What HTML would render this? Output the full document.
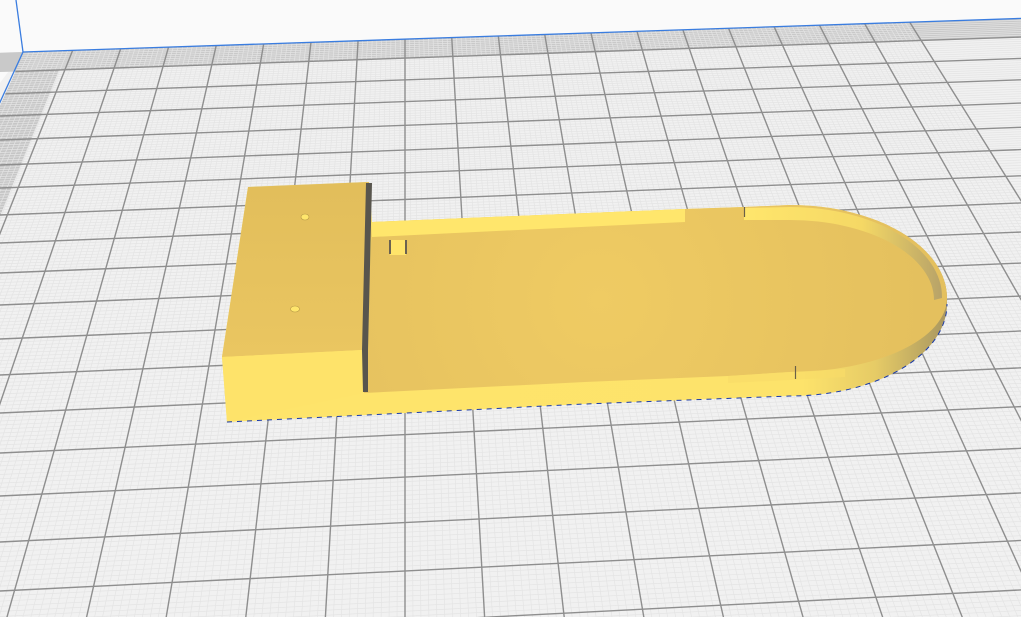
<!DOCTYPE html>
<html><head><meta charset="utf-8"><style>
html,body{margin:0;padding:0;width:1021px;height:617px;overflow:hidden;background:#fafafa}
svg{display:block;position:fixed;left:0;top:0}
</style></head><body>
<svg id="s" width="1021" height="617" viewBox="0 0 1021 617" xmlns="http://www.w3.org/2000/svg">
<defs>
<linearGradient id="sil" x1="222" y1="0" x2="948" y2="0" gradientUnits="userSpaceOnUse">
<stop offset="0" stop-color="#fee46b"/><stop offset="0.8" stop-color="#fde36b"/><stop offset="0.9" stop-color="#e6cb66"/><stop offset="1" stop-color="#a89660"/>
</linearGradient>
<radialGradient id="floor" cx="600" cy="300" r="330" gradientUnits="userSpaceOnUse">
<stop offset="0" stop-color="#efcb63"/><stop offset="1" stop-color="#e4c05e"/>
</radialGradient>
<linearGradient id="rimin" x1="744" y1="0" x2="940" y2="0" gradientUnits="userSpaceOnUse">
<stop offset="0" stop-color="#ffe66c"/><stop offset="0.6" stop-color="#f5d865"/><stop offset="1" stop-color="#b9a468"/>
</linearGradient>
<linearGradient id="blk" x1="0" y1="187" x2="0" y2="357" gradientUnits="userSpaceOnUse">
<stop offset="0" stop-color="#e2be5b"/><stop offset="1" stop-color="#eac661"/>
</linearGradient>
</defs>
<rect width="1021" height="617" fill="#fafafa"/>
<polygon points="23,52 1030,18 1030,650 -50,650 -50,150" fill="#f1f1f1"/>
<g id="grid"></g>
<g id="obj">
<path d="M222,357 L248,187 L369,182 L372,222 L685,209 L744,207 L790,205 A157,93 0 0 1 947,298 L947,304 A157,92 0 0 1 790,396 L585,404 L227,422 Z" fill="url(#sil)"/>
<path d="M372,222 L685,209 L744,207 L790,205 A157,93 0 0 1 947,298 A157,74 0 0 1 790,372 L728,376 L585,382 L364,393 Z" fill="url(#floor)"/>
<path d="M372,222 L685,209 L685,222 L372,237 Z" fill="#ffe66c"/>
<path d="M744,208 L790,207 A152,90 0 0 1 942,298 L934,300 A144,80 0 0 0 790,220 L744,220 Z" fill="url(#rimin)"/>
<path d="M728,376 L790,372 L845,369 L845,377 L790,380 L728,383 Z" fill="#f8dc68" opacity="0.7"/>
<line x1="744.5" y1="207" x2="744.5" y2="217" stroke="#6a6048" stroke-width="1.2"/>
<line x1="795.5" y1="366" x2="795.5" y2="379" stroke="#6a6048" stroke-width="1.2"/>
<path d="M248,187 L369,182 L362,350 L222,357 Z" fill="url(#blk)"/>
<path d="M222,357 L362,350 L364,393 L227,422 Z" fill="#fee36a"/>
<path d="M366,183 L372,183 L368,350 L368,392 L363,392 L362,350 Z" fill="#58554d"/>
<ellipse cx="305" cy="217" rx="4" ry="3" fill="#ffe66c" stroke="#b89a48" stroke-width="0.6"/>
<ellipse cx="295" cy="309" rx="4.5" ry="3" fill="#ffe66c" stroke="#b89a48" stroke-width="0.6"/>
<rect x="390" y="240" width="16" height="15" fill="#ffe46a"/>
<rect x="389" y="240" width="2" height="14" fill="#6b6250"/>
<rect x="405" y="240" width="2" height="14" fill="#6b6250"/>
<path d="M227,422 L585,404 L790,396 A157,92 0 0 0 947,304" fill="none" stroke="#1a3aa8" stroke-width="1" stroke-dasharray="5 5"/>
</g>
</svg>
<script>
(function(){
var NS="http://www.w3.org/2000/svg",g=document.getElementById("grid");
function vx(j,y){return 60+69*j+(y-430)*(-53+10.6*j)/187;}
function topY(j){var y=52;for(var i=0;i<5;i++){var x=vx(j,y);y=52.7-0.0336*x;}return y;}
var yL=[52.7,72,94,116,140,165,188,215,243,273,305,339,375,413,453,496,542,591,642,695];
function sl(y){return -0.0336-(y-52)*0.0000295;}
function line(x1,y1,x2,y2,c,w){var l=document.createElementNS(NS,"line");l.setAttribute("x1",x1.toFixed(2));l.setAttribute("y1",y1.toFixed(2));l.setAttribute("x2",x2.toFixed(2));l.setAttribute("y2",y2.toFixed(2));l.setAttribute("stroke",c);l.setAttribute("stroke-width",w);g.appendChild(l);}
function poly(pts,c){var p=document.createElementNS(NS,"polygon");p.setAttribute("points",pts.map(function(a){return a[0].toFixed(1)+","+a[1].toFixed(1)}).join(" "));p.setAttribute("fill",c);g.appendChild(p);}
var pts=[],y;
for(y=topY(-3);y<=650;y+=10)pts.push([vx(-3,y),y]);
var p2=[];for(y=topY(-2.12);y<=650;y+=10)p2.push([vx(-2.12,y),y]);
poly(pts.concat(p2.reverse()),"#c6c6c6");
var tr=[];for(var x=-50;x<=1030;x+=20)tr.push([x,52.7-0.0336*x]);
for(x=1030;x>=-50;x-=20)tr.push([x,72+sl(72)*x]);
poly(tr,"#c9c9c9");
for(var k=0;k<yL.length-1;k++){for(var m=1;m<10;m++){var yy=yL[k]+(yL[k+1]-yL[k])*m/10;var s=sl(yy);
 var xs=Math.max(-10,vx(-3,yy));line(xs,yy+s*xs,1030,yy+s*1030,"#e4e4e4",0.7);}}
for(var j=-3;j<=16.01;j+=0.1){var jj=Math.round(j*10)/10;if(Math.abs(jj-Math.round(jj))<0.01)continue;var t=topY(jj);line(vx(jj,t),t,vx(jj,650),650,"#e4e4e4",0.7);}
for(k=1;k<yL.length;k++){var yy=yL[k],s=sl(yy);var xs=Math.max(-10,vx(-3,yy));line(xs,yy+s*xs,1030,yy+s*1030,"#8e8e8e",1.4);}
for(j=-2;j<=16;j++){var t=topY(j);line(vx(j,t),t,vx(j,650),650,"#8e8e8e",1.4);}
line(16,0,23,52,"#3a7de0",1.3);
line(23,52,1030,18.1,"#3a7de0",1.3);
line(23,52,-10,124,"#3a7de0",1.3);
})();
</script>
</body></html>
